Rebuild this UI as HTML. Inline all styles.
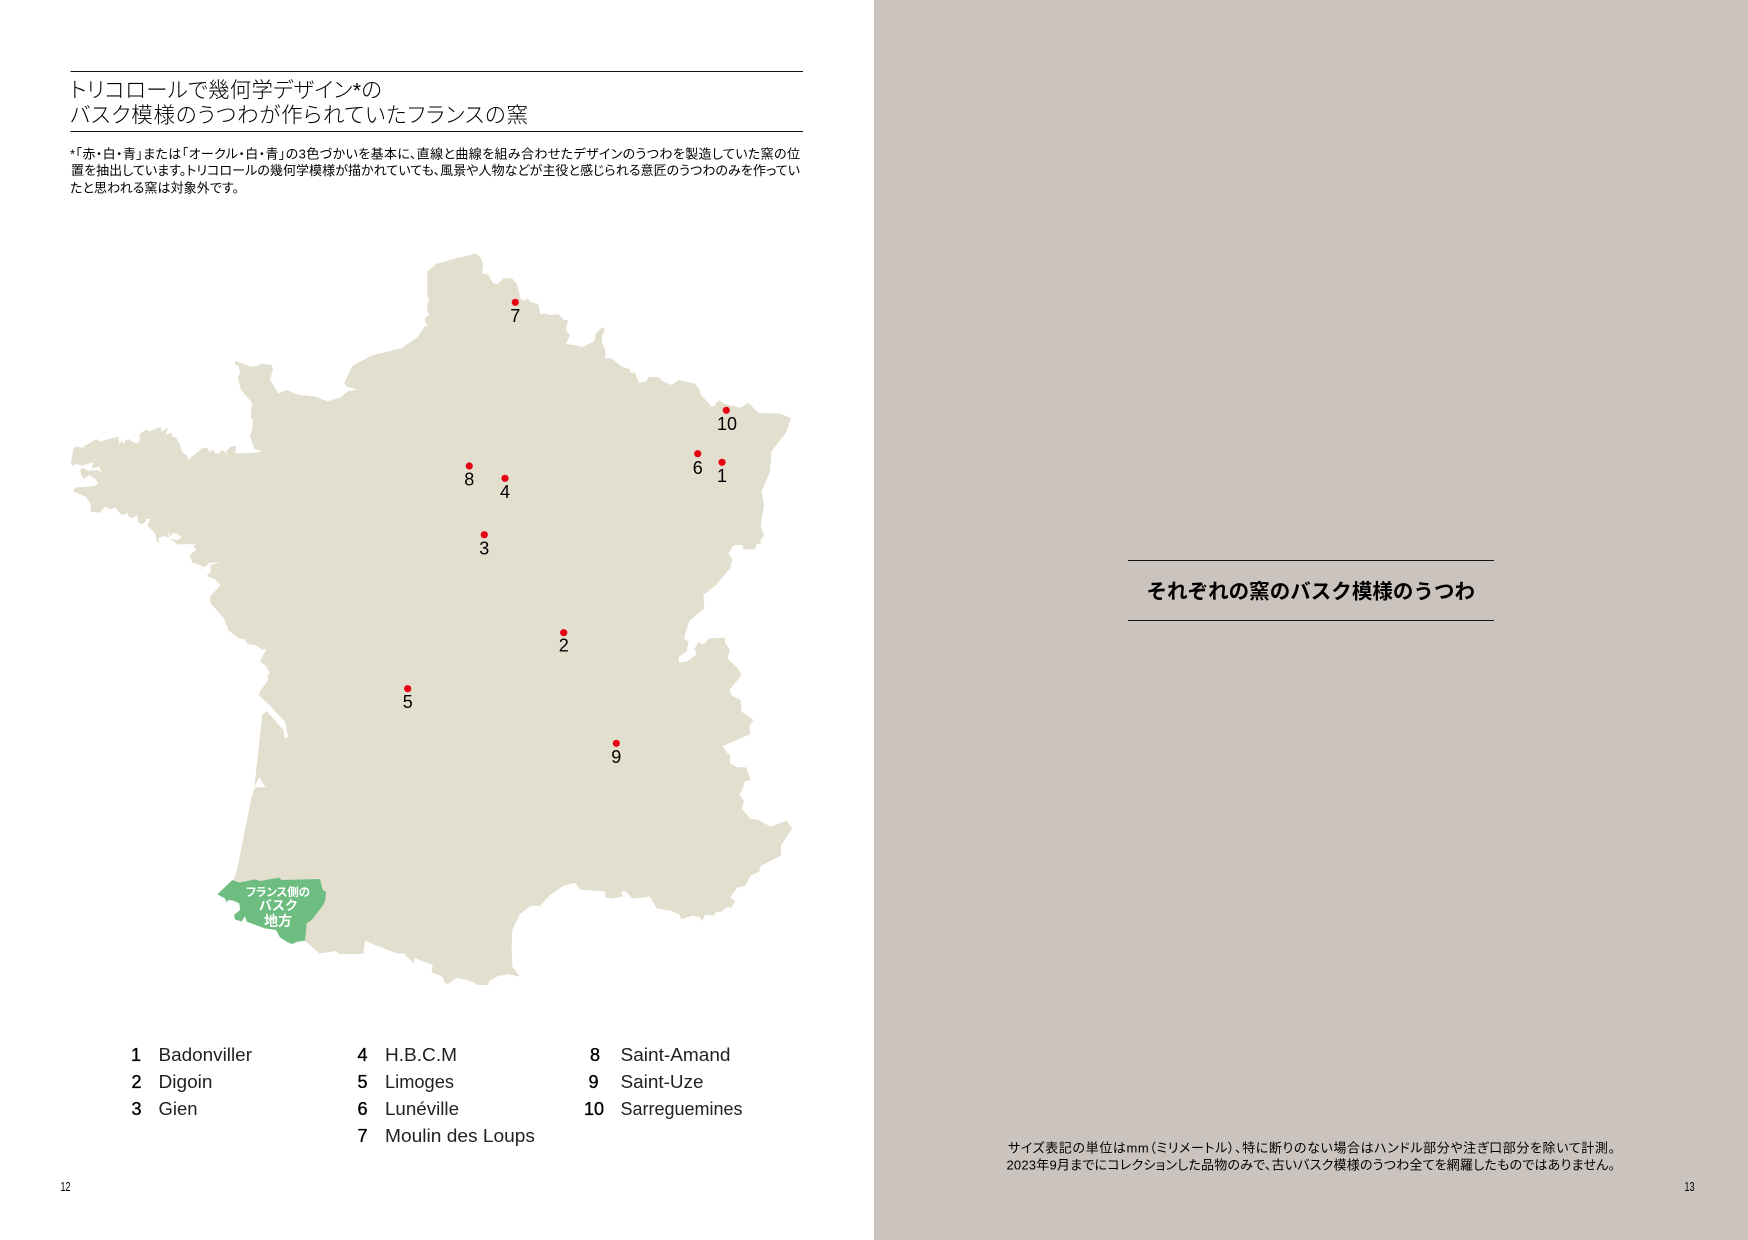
<!DOCTYPE html>
<html lang="ja">
<head>
<meta charset="utf-8">
<title>それぞれの窯のバスク模様のうつわ</title>
<style>
html,body{margin:0;padding:0;background:#fff;width:1748px;height:1240px;overflow:hidden}
svg{display:block}
text{font-family:"Liberation Sans","Noto Sans CJK JP",sans-serif;fill:#000;font-feature-settings:"palt"}
.h{font-size:21.5px;font-weight:300}
.s{font-size:13px}
.n{font-size:18px;text-anchor:end;stroke:#000;stroke-width:.35}
.t{font-size:18px;fill:#222}
.d{font-size:18px;text-anchor:middle;fill:#000}
.g{fill:#fff;font-weight:700;text-anchor:middle}
.m path,.m polygon{fill:#e2dfcf}
</style>
</head>
<body>
<svg width="1748" height="1240" viewBox="0 0 1748 1240" xmlns="http://www.w3.org/2000/svg">
<rect x="874" y="0" width="874" height="1240" fill="#cbc3be"/>

<g class="m">
<polygon transform="translate(410,240) scale(.33333)" points="120,930 0,307 20,295 45,258 55,260 45,245 46,232 60,222 52,218 52,190 58,180 52,170 52,95 78,72 130,57 197,41 210,50 219,70 216,100 235,105 250,130 262,132 280,116 305,114 320,130 332,175 340,183 355,175 358,185 384,192 392,225 402,220 420,225 445,222 462,240 474,240 467,268 480,287 467,313 490,314 516,321 553,304 558,280 575,262 585,268 576,290 576,310 587,330 585,355 605,355 635,380 660,387 660,398 675,398 687,428 710,423 715,411 745,411 760,425 785,435 807,420 855,431 867,445 873,465 905,500 915,498 918,488 930,482 945,492 990,503 1015,489 1047,519 1110,521 1143,534 1128,578 1085,633 1080,695 1055,753 1062,795 1052,858 1062,888 1052,898 1052,910 1040,912 1035,928 998,928 998,915 972,915 955,940 968,960 960,980 915,1035 900,1050"/>
<polygon transform="translate(690,540) scale(.33333)" points="-720,30 125,80 78,135 40,165 43,205 0,240"/>
<polygon transform="translate(500,600) scale(.33333)" points="-150,-150 612,0 612,22 567,65 552,115 565,125 560,155 537,170 537,187 562,184 590,163 583,147 595,127 610,133 628,115 675,113 675,128 690,150 682,175 715,207 725,225 688,270 695,287 722,300 725,335 760,360 748,380 752,402 668,438 682,460 690,462 690,490 712,502 738,502 752,540 735,543 725,575 718,582 732,605 725,625 750,655 775,660 812,680 860,662 877,685 843,737 843,767 782,798 778,815 752,827 735,858 713,862 690,892 705,902 695,922 680,922 665,935 645,937 644,947 615,943 607,965 600,952 577,947 543,958 540,945 515,933 470,925 450,890 398,896 375,873 364,875 368,890 335,896 316,892 316,875 240,869 225,848 190,858 150,885 120,918 92,918 60,942 37,990 35,1040 37,1100 60,1130 25,1122 0,1128"/>
<polygon transform="translate(200,680) scale(.33333)" points="750,-390 925,882 900,885 867,903 865,915 835,915 810,903 770,893 745,912 735,910 727,890 695,877 698,855 645,835 640,850 612,820 590,820 495,783 490,822 415,822 410,813 358,820 315,782 270,792 100,600 110,575 155,350 165,322 197,322 178,292 163,320 187,105 200,93 250,150 255,177 264,170 255,125 205,72 175,45 205,0"/>
<polygon transform="translate(190,560) scale(.33333)" points="780,-30 205,400 235,360 232,342 240,340 228,318 210,305 230,265 218,270 195,255 172,252 165,238 145,235 115,210 102,175 62,130 60,110 90,78"/>
<polygon transform="translate(60,240) scale(.33333)" points="1170,930 470,1050 482,1035 465,1018 440,1008 452,995 452,975 478,966 450,968 432,982 420,975 397,968 389,945 408,930 400,915 410,912 352,913 330,897 355,900 365,892 350,880 338,880 332,890 323,872 328,893 308,888 295,895 300,912 290,902 285,880 262,855 270,838 258,835 258,845 245,852 235,848 232,825 215,835 205,828 205,820 185,825 165,803 150,808 135,800 120,818 90,815 93,795 78,770 40,755 45,743 105,738 113,730 108,718 88,706 70,717 60,695 65,683 85,692 115,690 130,703 115,700 125,695 118,680 95,685 100,667 65,677 48,672 38,678 33,668 40,628 48,620 72,624 70,620 110,597 118,605 175,590 178,612 185,603 193,612 195,602 205,597 225,609 238,608 240,582 260,567 265,575 302,561 305,575 323,563 318,585 335,578 337,590 348,592 362,618 365,635 382,648 385,660 425,625 442,624 447,635 460,630 465,640 480,640 482,632 492,632 507,655 498,635 512,620 527,617 527,640 595,638 605,630 590,630 582,625 570,590 578,565 578,540 572,530 576,488 543,450 533,410 540,400 537,380 525,373 525,362 572,380 590,378 605,371 635,375 639,388 630,418 655,460 678,450 718,465 765,469 802,484 840,473 862,455 892,448 860,440 852,430 878,377 935,347 1025,324 1050,307 1070,294"/>
</g>
<polygon transform="translate(200,680) scale(.33333)" fill="#6dbd80" points="52,643 97,600 118,608 165,598 180,603 237,593 245,600 360,597 368,630 378,635 376,660 370,675 335,720 320,730 315,782 290,785 278,792 265,788 240,772 228,750 195,745 140,725 135,708 125,725 105,718 102,705 120,690 118,670 100,662 85,660 80,667 75,655"/>

<text class="g" x="278" y="896" font-size="11.5" textLength="64" lengthAdjust="spacing">フランス側の</text>
<text class="g" x="278" y="910" font-size="13" textLength="38" lengthAdjust="spacing">バスク</text>
<text class="g" x="278" y="926" font-size="14" textLength="28" lengthAdjust="spacing">地方</text>

<g fill="#e60012">
<circle cx="515.3" cy="302.3" r="3.6"/>
<circle cx="726.3" cy="410.3" r="3.6"/>
<circle cx="697.7" cy="453.7" r="3.6"/>
<circle cx="722" cy="462.3" r="3.6"/>
<circle cx="469.3" cy="466" r="3.6"/>
<circle cx="505" cy="478.3" r="3.6"/>
<circle cx="484.3" cy="534.7" r="3.6"/>
<circle cx="407.7" cy="688.7" r="3.6"/>
<circle cx="563.7" cy="632.7" r="3.6"/>
<circle cx="616.3" cy="743.3" r="3.6"/>
</g>
<text class="d" x="515.3" y="322">7</text>
<text class="d" x="727" y="430">10</text>
<text class="d" x="697.7" y="474">6</text>
<text class="d" x="722" y="482">1</text>
<text class="d" x="469.3" y="485.7">8</text>
<text class="d" x="505" y="498">4</text>
<text class="d" x="484.3" y="554.7">3</text>
<text class="d" x="407.7" y="708">5</text>
<text class="d" x="563.7" y="651.7">2</text>
<text class="d" x="616.3" y="763">9</text>

<rect x="70.5" y="71" width="732.5" height="1" fill="#111"/>
<rect x="70.5" y="131" width="732.5" height="1" fill="#111"/>
<text class="h" x="70" y="97.5" textLength="312" lengthAdjust="spacing">トリコロールで幾何学デザイン*の</text>
<text class="h" x="70" y="122.5" textLength="458" lengthAdjust="spacing">バスク模様のうつわが作られていたフランスの窯</text>
<text class="s" x="70" y="158.5" textLength="730" lengthAdjust="spacing">*「赤・白・青」または「オークル・白・青」の3色づかいを基本に、直線と曲線を組み合わせたデザインのうつわを製造していた窯の位</text>
<text class="s" x="71" y="175" textLength="729" lengthAdjust="spacing">置を抽出しています。トリコロールの幾何学模様が描かれていても、風景や人物などが主役と感じられる意匠のうつわのみを作ってい</text>
<text class="s" x="70" y="192.5" textLength="169" lengthAdjust="spacing">たと思われる窯は対象外です。</text>

<text class="n" x="141" y="1061">1</text>
<text class="t" x="158.5" y="1061" textLength="93.5" lengthAdjust="spacingAndGlyphs">Badonviller</text>
<text class="n" x="141.5" y="1088">2</text>
<text class="t" x="158.5" y="1088" textLength="54" lengthAdjust="spacingAndGlyphs">Digoin</text>
<text class="n" x="141.5" y="1115">3</text>
<text class="t" x="158.5" y="1115" textLength="39" lengthAdjust="spacingAndGlyphs">Gien</text>

<text class="n" x="367.5" y="1061">4</text>
<text class="t" x="385" y="1061" textLength="72" lengthAdjust="spacingAndGlyphs">H.B.C.M</text>
<text class="n" x="367.5" y="1088">5</text>
<text class="t" x="385" y="1088" textLength="69" lengthAdjust="spacingAndGlyphs">Limoges</text>
<text class="n" x="367.5" y="1115">6</text>
<text class="t" x="385" y="1115" textLength="74" lengthAdjust="spacingAndGlyphs">Lunéville</text>
<text class="n" x="367.5" y="1142">7</text>
<text class="t" x="385" y="1142" textLength="150" lengthAdjust="spacingAndGlyphs">Moulin des Loups</text>

<text class="n" x="600" y="1061">8</text>
<text class="t" x="620.5" y="1061" textLength="110" lengthAdjust="spacingAndGlyphs">Saint-Amand</text>
<text class="n" x="598.5" y="1088">9</text>
<text class="t" x="620.5" y="1088" textLength="83" lengthAdjust="spacingAndGlyphs">Saint-Uze</text>
<text class="n" x="604" y="1115">10</text>
<text class="t" x="620.5" y="1115" textLength="122" lengthAdjust="spacingAndGlyphs">Sarreguemines</text>

<text x="60.5" y="1191" font-size="12.5" textLength="10" lengthAdjust="spacingAndGlyphs">12</text>
<text x="1684.5" y="1191" font-size="12.5" textLength="10" lengthAdjust="spacingAndGlyphs">13</text>

<rect x="1128" y="560" width="366" height="1" fill="#111"/>
<rect x="1128" y="620" width="366" height="1" fill="#111"/>
<text x="1146.5" y="598.5" font-size="20.5" font-weight="700" textLength="328.5" lengthAdjust="spacing" style="font-feature-settings:normal">それぞれの窯のバスク模様のうつわ</text>

<text class="s" x="1008" y="1152.5" textLength="607" lengthAdjust="spacing">サイズ表記の単位はmm（ミリメートル）、特に断りのない場合はハンドル部分や注ぎ口部分を除いて計測。</text>
<text class="s" x="1006.5" y="1169.5" textLength="608.5" lengthAdjust="spacing">2023年9月までにコレクションした品物のみで、古いバスク模様のうつわ全てを網羅したものではありません。</text>
</svg>
</body>
</html>
